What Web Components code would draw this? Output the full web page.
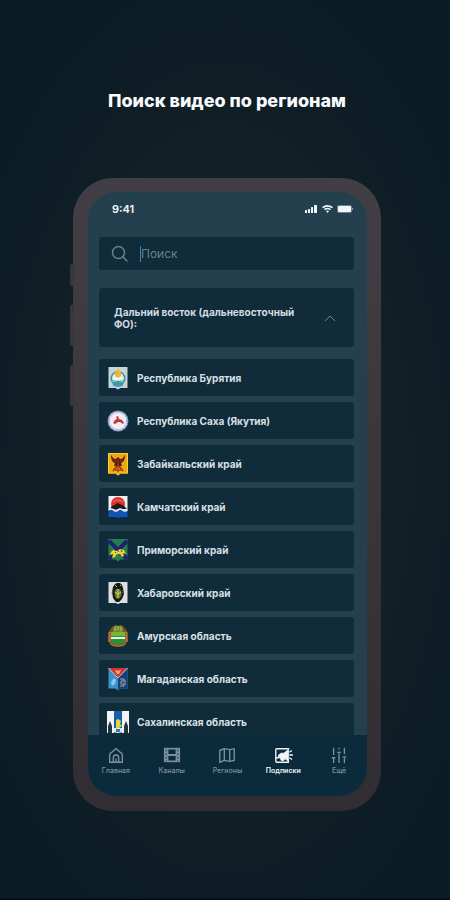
<!DOCTYPE html>
<html lang="ru">
<head>
<meta charset="UTF-8">
<meta name="viewport" content="width=device-width, initial-scale=1">
<title>Поиск видео по регионам</title>
<style>
    body {
        margin: 0;
        background: #0c1b23;
        color: #dfe7ec;
        font-family: Inter, "Liberation Sans", sans-serif;
    }
</style>
</head>
<body>
<promo-page>
    <span slot="title">Поиск видео по регионам</span>
    <phone-frame>
        <status-bar time="9:41"></status-bar>
        <search-field placeholder="Поиск"></search-field>
        <region-group heading="Дальний восток (дальневосточный ФО):">
            <region-row crest="buryatia">Республика Бурятия</region-row>
            <region-row crest="sakha">Республика Саха (Якутия)</region-row>
            <region-row crest="zabaykalye">Забайкальский край</region-row>
            <region-row crest="kamchatka">Камчатский край</region-row>
            <region-row crest="primorye">Приморский край</region-row>
            <region-row crest="khabarovsk">Хабаровский край</region-row>
            <region-row crest="amur">Амурская область</region-row>
            <region-row crest="magadan">Магаданская область</region-row>
            <region-row crest="sakhalin">Сахалинская область</region-row>
        </region-group>
        <tab-bar slot="tabs">
            <tab-item icon="home">Главная</tab-item>
            <tab-item icon="film">Каналы</tab-item>
            <tab-item icon="map">Регионы</tab-item>
            <tab-item icon="promo" active>Подписки</tab-item>
            <tab-item icon="sliders">Ещё</tab-item>
        </tab-bar>
    </phone-frame>
</promo-page>

<script>
// Coats of arms, all drawn on a 22x24 grid
const CRESTS = {
    buryatia: `
        <path d="M1.500 1h19v21h-7L11 23.500 8.500 22h-7z" fill="#cbd2d4"/>
        <circle cx="11" cy="12.500" r="7.500" fill="#2e94b8"/>
        <circle cx="11" cy="12.500" r="6" fill="#e8eddf"/>
        <path d="M5.400 13.500h11.200a5.600 5.600 0 0 1-11.200 0z" fill="#3d9c9d"/>
        <path d="M6 12l3-2 2 1 2-1 3 2v2H6z" fill="#f2f6f3"/>
        <path d="M6 15.500q5-3 10 0" fill="none" stroke="#e4eee9"/>
        <path d="M11 3c2 2 3.500 3 3 5.500a3 3 0 0 1-6 0C7.500 6 9 5 11 3z" fill="#edb928"/>
        <path d="M6 18.500q5 3 10 0" fill="none" stroke="#4a91bd" stroke-width="2"/>`,
    sakha: `
        <circle cx="11" cy="12" r="10.500" fill="#7b8fbd"/>
        <circle cx="11" cy="12" r="9.500" fill="#d6def0"/>
        <circle cx="11" cy="12" r="8.500" fill="none" stroke="#8798c5" stroke-dasharray="1 1"/>
        <circle cx="11" cy="12" r="8" fill="#f6eeee"/>
        <path d="M6 14l2-3 2-1-1-2 2-1 1 3 3 1 2 3-1 1-3-2h-2l-3 2z" fill="#c7333c"/>`,
    zabaykalye: `
        <path d="M1 1h20v20.500h-7.500L11 23.500l-2.500-2H1z" fill="#eda814"/>
        <path d="M1.500 1.500h19V21h-7l-2.500 2L8.500 21h-7z" fill="none" stroke="#ffd02a"/>
        <path d="M4 3c2 3 3 4 5 4l2-2 2 2c2 0 3-1 5-4 0 4-1 7-4 8l1 3H7l1-3C5 10 4 7 4 3z" fill="#551d14"/>
        <path d="M6 6l3 4M16 6l-3 4M11 7v7" stroke="#a23818"/>
        <path d="M6 19l5-6 5 6" fill="none" stroke="#8d3516" stroke-width="1.500"/>
        <path d="M8 18h6M11 14v6" stroke="#b54018" stroke-width="1.500"/>`,
    kamchatka: `
        <path d="M1.500 1h19v14h-19z" fill="#edf0f2"/>
        <circle cx="11" cy="9" r="7" fill="#e22d29"/>
        <path d="M6 7q5-4 10 0" fill="none" stroke="#f17a55"/>
        <path d="M3 14l2-3 3-1 2-2 3 1 2 1 2 1 3 3z" fill="#181a24"/>
        <path d="M1.500 15q2.500-2 5 0t4.500 0 4.500 0 5 0v7h-7L11 23l-2.500-1h-7z" fill="#1154b9"/>
        <path d="M1.500 15q2.500-2 5 0t4.500 0 4.500 0 5 0" fill="none" stroke="#f3f7fb" stroke-width="1.500"/>`,
    primorye: `
        <path d="M1.500 1h19v20.500h-7L11 23.500l-2.500-2h-7z" fill="#21814b"/>
        <path d="M2 3l18 18M20 3L2 21" stroke="#241f6e" stroke-width="4"/>
        <path d="M4 14l2-2 4 1 3-2 4 1 2 4-3-1 1 3-2 1-2-3h-3l-2 3-3 1 1-4-3 1z" fill="#ead43a"/>
        <path d="M8 14l1 1M11 13l1 1M14 12l1 2" stroke="#494828"/>`,
    khabarovsk: `
        <path d="M1.500 1h19v21h-7L11 23l-2.500-1h-7z" fill="#dcdfdf"/>
        <path d="M8 3l2-1h3l2 2 1 3 1 6-2 5-3 3H9l-3-4-1-6 1-5z" fill="#151916"/>
        <path d="M9 8c-2 3-2 7 1 10l3-1c2-3 2-6 0-9z" fill="#6e7a3c"/>
        <path d="M11 8v9M8 11l3 2 3-2" stroke="#e4cf50" fill="none"/>
        <path d="M8 4l2 2M13 5l1-1" stroke="#c9bd91"/>
        <path d="M6 9l-1 4M16 9v4" stroke="#555a51"/>`,
    amur: `
        <path d="M2 7l4-5h10l4 5 1 10-4 5-6 1-6-1-4-5z" fill="#7e5228"/>
        <path d="M2.500 8v10M19.500 8v10" stroke="#c07138" stroke-width="2"/>
        <path d="M6 5l2-4 3 1 3-1 2 4v3H6z" fill="#6f8a34"/>
        <path d="M8 3v4M11 2v4M14 3v4" stroke="#d2b34b"/>
        <path d="M4 8h14v10q-2 2-7 3-5-1-7-3z" fill="#299238"/>
        <path d="M4 8h14v4H4z" fill="#6fb83a"/>
        <path d="M4 13h14v2H4z" fill="#e7f0de"/>
        <path d="M3 19q8 5 16 0v1q-8 5-16 0z" fill="#c77733"/>`,
    magadan: `
        <path d="M1.500 1h19v20.500h-7L11 23.500l-2.500-2h-7z" fill="#3b91ca"/>
        <path d="M11 11l9.500-10v20.500h-7l-2.500 2z" fill="#173e7b"/>
        <path d="M1.500 1h19L11 11z" fill="#d3332d"/>
        <path d="M1.500 1L11 11l9.500-10" fill="none" stroke="#b9c9d6"/>
        <path d="M8 3h1l2 1 2-1h1l-2 4h-2z" fill="#f0aa8d"/>
        <path d="M4 15l3-4 2 2-1 4-3 2z" fill="#87c6e8"/>
        <path d="M13 12h4v2h-3v3h3v2h-4M18 13v5" fill="none" stroke="#a7a988"/>`,
    sakhalin: `
        <path d="M0 1h7v22H0zM15 1h7v22h-7z" fill="#f2f4f6"/>
        <path d="M7 1h8v22H7z" fill="#175fae"/>
        <path d="M1 23v-7l2-5 2 5v7zM17 23v-7l2-5 2 5v7z" fill="#233640"/>
        <path d="M9 10l2-1 3 2-1 3 2 2-3 2H9z" fill="#e7d63b"/>
        <path d="M7 18h8v4q-4 2-8 0z" fill="#dde6e8"/>
        <path d="M9 19h4v3H9z" fill="#3878b1"/>`
};

// Tab icons, stroked with the colour of the tab
const ICONS = {
    home: `<path d="M3 18V9l7-6 7 6v9z"/><path d="M7 18v-5a3 3 0 0 1 6 0v5M10 14v4"/>`,
    film: `<path d="M1 2h18v16H1z" stroke="none" fill="currentColor"/><path d="M6 4h8v5H6zM6 11h8v5H6z" stroke="none" fill="#0b2a3b"/><path d="M3.500 4v13M16.500 4v13" stroke="#0b2a3b" stroke-width="1" stroke-dasharray="2 2"/>`,
    map: `<path d="M2 5l5-2 6 1 5-1v13l-5 1-6-1-5 2zM7 3v13M13 4v13"/>`,
    promo: `<path d="M17 3H3a1 1 0 0 0-1 1v13a1 1 0 0 0 1 1h13v-2M2 13h4"/><path d="M5 10l3-2h3l5-4v13l-4-3-1 2H8l-1-3-2-1z" fill="currentColor" stroke-width="1"/><path d="M17 7l3-2M17 10h4M17 13l3 2"/>`,
    sliders: `<path d="M4 2v8M4 14v5M10 2v2M10 8v11M16 2v7M16 13v6M2 13h4M8 7h4M14 12h4"/>`
};

class PromoPage extends HTMLElement {
    constructor() {
        super();
        this.attachShadow({ mode: 'open' });
        this.shadowRoot.innerHTML = `
            <style>
                :host {
                    display: grid;
                    grid-template-rows: 178px minmax(0, 1fr);
                    height: 100vh;
                    min-height: 480px;
                    box-sizing: border-box;
                    padding: 0 69px 89px 73px;
                    background:
                        linear-gradient(to top, #050a18 1px, transparent 2px),
                        radial-gradient(ellipse 60% 55% at 50% 52%, #122027 60%, #0c1c24 100%);
                }
                h1 {
                    margin: 0 -60px;
                    padding-top: 89px;
                    font-size: 18px;
                    line-height: 24px;
                    font-weight: 800;
                    text-align: center;
                    color: #f8fafb;
                }
            </style>
            <h1><slot name="title"></slot></h1>
            <slot></slot>
        `;
    }
}

class PhoneFrame extends HTMLElement {
    constructor() {
        super();
        this.attachShadow({ mode: 'open' });
        this.shadowRoot.innerHTML = `
            <style>
                :host {
                    display: grid;
                    grid-template-rows: minmax(0, 1fr);
                    position: relative;
                    box-sizing: border-box;
                    padding: 14px 14px 15px 15px;
                    border-radius: 40px;
                    background: linear-gradient(to bottom, #413f45, #39363b 50%, #302e33);
                }
                .keys {
                    position: absolute;
                    top: 86px;
                    left: -3px;
                    display: grid;
                    gap: 19px;
                }
                .key {
                    width: 4px;
                    height: 41px;
                    border-radius: 2px 0 0 2px;
                    background: #39363b;
                }
                .key:first-child {
                    height: 22px;
                }
                .screen {
                    display: flex;
                    flex-direction: column;
                    overflow: hidden;
                    border-radius: 28px;
                    background: #24404f;
                }
                .content {
                    flex: 1;
                    min-height: 0;
                    overflow: hidden;
                    padding: 0 13px 0 11px;
                }
            </style>
            <div class="keys">
                <div class="key"></div>
                <div class="key"></div>
                <div class="key"></div>
            </div>
            <div class="screen">
                <div class="content"><slot></slot></div>
                <slot name="tabs"></slot>
            </div>
        `;
    }
}

class StatusBar extends HTMLElement {
    connectedCallback() {
        this.attachShadow({ mode: 'open' });
        this.shadowRoot.innerHTML = `
            <style>
                :host {
                    display: flex;
                    align-items: center;
                    justify-content: space-between;
                    height: 33px;
                    padding: 0 0 12px 13px;
                    font-size: 11px;
                    font-weight: 600;
                    color: #f2f6f8;
                }
                svg {
                    fill: currentColor;
                }
            </style>
            <span>${this.getAttribute('time')}</span>
            <svg width="50" height="10" viewBox="0 0 50 10" aria-hidden="true">
                <rect x="1" y="6" width="2" height="3" rx=".5"/>
                <rect x="4" y="5" width="2" height="4" rx=".5"/>
                <rect x="7" y="3" width="2" height="6" rx=".5"/>
                <rect x="10" y="1" width="3" height="8" rx=".5"/>
                <path d="M18 3q5-4 11 0l-1 1.300q-4.500-3-9 0zM20 5q3.500-2.500 7 0l-1 1.300q-2.500-2-5 0zM22 7q1.500-1 3 0l-1.500 2z"/>
                <rect x="33" y="1" width="15" height="8" rx="2" opacity=".35"/>
                <rect x="34" y="2" width="13" height="6" rx="1"/>
                <rect x="48" y="4" width="1" height="2" opacity=".5"/>
            </svg>
        `;
    }
}

class SearchField extends HTMLElement {
    connectedCallback() {
        this.attachShadow({ mode: 'open' });
        this.shadowRoot.innerHTML = `
            <style>
                :host {
                    display: block;
                }
                label {
                    display: flex;
                    align-items: center;
                    gap: 12px;
                    height: 33px;
                    padding: 0 12px;
                    border-radius: 3px;
                    background: #102b3a;
                }
                svg {
                    flex: none;
                    fill: none;
                    stroke: #6c7f8a;
                    stroke-width: 1.500;
                    stroke-linecap: round;
                }
                input {
                    flex: 1;
                    min-width: 0;
                    height: 16px;
                    padding: 0;
                    border: 0;
                    border-left: 1px solid #2b87c4;
                    outline: 0;
                    background: none;
                    color: #dfe7ec;
                    font: 12px/16px Inter, "Liberation Sans", sans-serif;
                }
                input::placeholder {
                    color: #6c7f8a;
                    opacity: 1;
                }
            </style>
            <label>
                <svg width="17" height="17" viewBox="0 0 17 17" aria-hidden="true">
                    <circle cx="7.500" cy="7.500" r="6"/>
                    <path d="M12 12l4 4"/>
                </svg>
                <input type="search" placeholder="${this.getAttribute('placeholder')}">
            </label>
        `;
        this.shadowRoot.querySelector('input').setAttribute('aria-label', this.getAttribute('placeholder'));
    }
}

class RegionGroup extends HTMLElement {
    connectedCallback() {
        this.attachShadow({ mode: 'open' });
        this.shadowRoot.innerHTML = `
            <style>
                :host {
                    display: block;
                    margin-top: 18px;
                }
                button {
                    display: flex;
                    align-items: center;
                    justify-content: space-between;
                    gap: 12px;
                    width: 100%;
                    min-height: 59px;
                    padding: 0 18px 0 15px;
                    border: 0;
                    border-radius: 3px;
                    background: #102b3a;
                    color: #d3dce2;
                    font: 700 10px/12px Inter, "Liberation Sans", sans-serif;
                    text-align: left;
                    cursor: pointer;
                }
                svg {
                    flex: none;
                    fill: none;
                    stroke: #71838d;
                }
                .rows {
                    display: grid;
                    gap: 6px;
                    margin-top: 12px;
                }
                .rows[hidden] {
                    display: none;
                }
            </style>
            <button type="button" aria-expanded="true">
                <span>${this.getAttribute('heading')}</span>
                <svg width="12" height="8" viewBox="0 0 12 8" aria-hidden="true"><path d="M1 7l5-5 5 5"/></svg>
            </button>
            <div class="rows"><slot></slot></div>
        `;
        this.button = this.shadowRoot.querySelector('button');
        this.rows = this.shadowRoot.querySelector('.rows');
        this.button.addEventListener('click', this.toggle);
    }

    toggle = () => {
        this.rows.hidden = !this.rows.hidden;
        this.button.setAttribute('aria-expanded', String(!this.rows.hidden));
    }
}

class RegionRow extends HTMLElement {
    connectedCallback() {
        this.attachShadow({ mode: 'open' });
        this.shadowRoot.innerHTML = `
            <style>
                :host {
                    display: block;
                }
                a {
                    display: flex;
                    align-items: center;
                    gap: 8px;
                    height: 37px;
                    padding: 0 8px;
                    border-radius: 3px;
                    background: #102b3a;
                    color: #d8e0e5;
                    font-size: 10px;
                    line-height: 16px;
                    font-weight: 700;
                    text-decoration: none;
                }
                svg {
                    flex: none;
                }
            </style>
            <a href="#${this.getAttribute('crest')}">
                <svg width="22" height="24" viewBox="0 0 22 24" aria-hidden="true">${CRESTS[this.getAttribute('crest')]}</svg>
                <span><slot></slot></span>
            </a>
        `;
    }
}

class TabBar extends HTMLElement {
    constructor() {
        super();
        this.attachShadow({ mode: 'open' });
        this.shadowRoot.innerHTML = `
            <style>
                :host {
                    display: block;
                    background: #0b2a3b;
                }
                nav {
                    display: grid;
                    grid-template-columns: repeat(5, minmax(0, 1fr));
                    padding: 11px 0 20px;
                }
            </style>
            <nav><slot></slot></nav>
        `;
    }
}

class TabItem extends HTMLElement {
    connectedCallback() {
        this.attachShadow({ mode: 'open' });
        this.shadowRoot.innerHTML = `
            <style>
                :host {
                    display: block;
                    color: #7d909f;
                }
                :host([active]) {
                    color: #f1f5f8;
                }
                a {
                    display: flex;
                    flex-direction: column;
                    align-items: center;
                    gap: 2px;
                    color: inherit;
                    font-size: 7px;
                    line-height: 10px;
                    font-weight: 500;
                    text-decoration: none;
                }
                :host([active]) a {
                    font-weight: 600;
                }
                svg {
                    fill: none;
                    stroke: currentColor;
                    stroke-width: 1.500;
                    overflow: visible;
                }
            </style>
            <a href="#${this.getAttribute('icon')}">
                <svg width="18" height="18" viewBox="0 0 20 20" aria-hidden="true">${ICONS[this.getAttribute('icon')]}</svg>
                <slot></slot>
            </a>
        `;
    }
}

customElements.define('promo-page', PromoPage);
customElements.define('phone-frame', PhoneFrame);
customElements.define('status-bar', StatusBar);
customElements.define('search-field', SearchField);
customElements.define('region-group', RegionGroup);
customElements.define('region-row', RegionRow);
customElements.define('tab-bar', TabBar);
customElements.define('tab-item', TabItem);
</script>
</body>
</html>
